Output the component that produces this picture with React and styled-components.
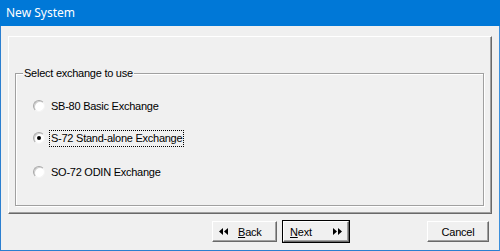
import React from 'react'
import styled, { createGlobalStyle } from 'styled-components'

const Global = createGlobalStyle`
  html, body {
    margin: 0;
    padding: 0;
    background: #f0f0f0;
  }
`

const Window = styled.div`
  width: 500px;
  height: 251px;
  box-sizing: border-box;
  display: flex;
  flex-direction: column;
  background: #f0f0f0;
  border-left: 1px solid #2b7fd0;
  border-right: 1px solid #3c8fdb;
  border-bottom: 1px solid #2b7fd0;
  font-family: "Liberation Sans", Arial, sans-serif;
  font-size: 11px;
  letter-spacing: -0.25px;
  color: #000;
`

const TitleBar = styled.div`
  height: 26px;
  margin: 0 -1px;
  background: #0078d7;
  color: #fff;
  font-family: "Noto Sans", "Open Sans", sans-serif;
  font-size: 12px;
  letter-spacing: 0;
  display: flex;
  align-items: center;
  padding-left: 6px;
  padding-bottom: 1px;
  box-sizing: border-box;
`

const Body = styled.div`
  flex: 1;
  display: flex;
  flex-direction: column;
  padding: 10px 7px 0 7px;
`

const Panel = styled.div`
  height: 178px;
  box-sizing: border-box;
  border-top: 1px solid #fff;
  border-left: 1px solid #fff;
  border-right: 1px solid #696969;
  border-bottom: 1px solid #696969;
  box-shadow: inset -1px -1px 0 #a0a0a0;
  padding: 36px 7px 7px 6px;
  display: flex;
`

const GroupBox = styled.div`
  position: relative;
  flex: 1;
  border: 1px solid #a0a0a0;
  box-shadow: 1px 1px 0 #fff, inset 1px 1px 0 #fff;
  display: flex;
  flex-direction: column;
  padding: 24px 0 0 17px;
`

const Caption = styled.span`
  position: absolute;
  top: -7px;
  left: 7px;
  padding: 0 1px;
  background: #f0f0f0;
  line-height: 13px;
`

const Option = styled.label`
  display: flex;
  align-items: center;
  height: 16px;
  margin-bottom: ${p => p.$gap}px;
`

const RadioCircle = styled.span`
  width: 12px;
  height: 12px;
  box-sizing: border-box;
  border-radius: 50%;
  background: #fff;
  border: 1px solid;
  border-color: #a8a8a8 #f4f4f4 #f4f4f4 #a8a8a8;
  box-shadow: inset 1px 1px 0 #d0d0d0;
  display: flex;
  align-items: center;
  justify-content: center;
  margin-right: 5px;

  &::after {
    content: '';
    width: 4px;
    height: 4px;
    border-radius: 50%;
    background: ${p => (p.$checked ? '#000' : 'transparent')};
  }
`

const OptionText = styled.span`
  padding: 1px 1px;
  line-height: 13px;
  outline: ${p => (p.$focused ? '1px dotted #000' : 'none')};
  outline-offset: 0;
`

const Footer = styled.div`
  display: flex;
  align-items: center;
  padding-top: 7px;
  padding-right: 3px;
`

const Button = styled.button`
  height: 21px;
  width: ${p => p.$w}px;
  margin-left: ${p => p.$ml}px;
  box-sizing: border-box;
  background: #f0f0f0;
  font-family: "Liberation Sans", Arial, sans-serif;
  font-size: 11px;
  letter-spacing: -0.2px;
  color: #000;
  border-top: 1px solid #fff;
  border-left: 1px solid #fff;
  border-right: 1px solid #696969;
  border-bottom: 1px solid #696969;
  box-shadow: inset -1px -1px 0 #a0a0a0;
  outline: ${p => (p.$default ? '1px solid #000' : 'none')};
  display: flex;
  align-items: center;
  justify-content: ${p => p.$justify || 'center'};
  padding: 0 6px;
  gap: 10px;
`

const Under = styled.span`
  text-decoration: underline;
`

const Arrows = ({ dir }) => (
  <svg width="9" height="7" viewBox="0 0 9 7">
    {dir === 'left' ? (
      <path d="M0 3.5L4 0v7zM5 3.5L9 0v7z" fill="#000" />
    ) : (
      <path d="M0 0l4 3.5L0 7zM5 0l4 3.5L5 7z" fill="#000" />
    )}
  </svg>
)

const options = [
  { label: 'SB-80 Basic Exchange', checked: false, gap: 16 },
  { label: 'S-72 Stand-alone Exchange', checked: true, gap: 18 },
  { label: 'SO-72 ODIN Exchange', checked: false, gap: 0 },
]

export default function App() {
  return (
    <Window>
      <Global />
      <TitleBar>New System</TitleBar>
      <Body>
        <Panel>
          <GroupBox>
            <Caption>Select exchange to use</Caption>
            {options.map(o => (
              <Option key={o.label} $gap={o.gap}>
                <RadioCircle $checked={o.checked} />
                <OptionText $focused={o.checked}>{o.label}</OptionText>
              </Option>
            ))}
          </GroupBox>
        </Panel>
        <Footer>
          <Button $w={65} $ml={204} $justify="flex-start">
            <Arrows dir="left" />
            <span><Under>B</Under>ack</span>
          </Button>
          <Button $w={66} $ml={6} $default $justify="space-between">
            <span><Under>N</Under>ext</span>
            <Arrows dir="right" />
          </Button>
          <Button $w={62} $ml={78}>Cancel</Button>
        </Footer>
      </Body>
    </Window>
  )
}
